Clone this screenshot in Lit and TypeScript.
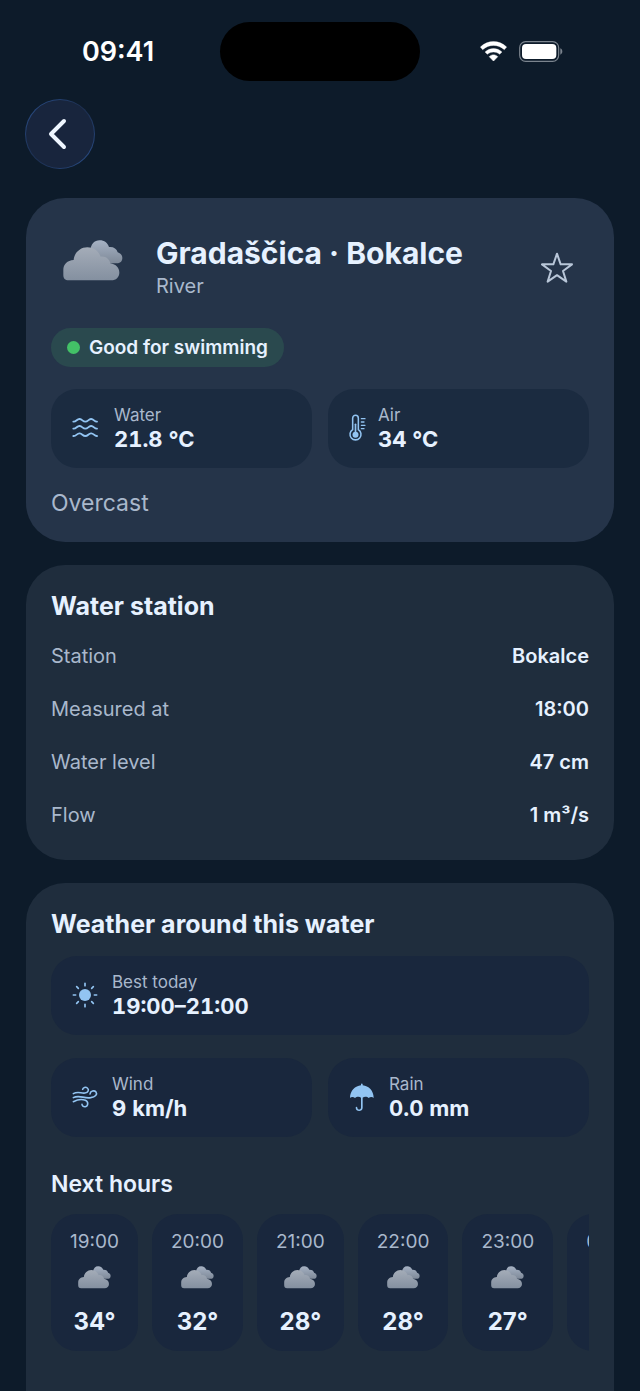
import { LitElement, html, css, svg } from "lit";
import { customElement, property, state } from "lit/decorators.js";

type IconName = "waves" | "thermometer" | "sun" | "wind" | "umbrella";

// Glyph art is drawn on a grid of three units per pixel.
const ICONS: Record<IconName, { w: number; h: number; body: unknown }> = {
  waves: {
    w: 31,
    h: 24,
    body: svg`<g fill="none" stroke="currentColor" stroke-width="5.6" stroke-linecap="round" stroke-linejoin="round">
      <path d="M7 17C16 18 18 8 26 9C34 10 35 17 43 17C51 17 52 10 60 9C68 8 70 18 78 17"/>
      <path d="M7 38C16 39 18 29 26 30C34 31 35 38 43 38C51 38 52 31 60 30C68 29 70 39 78 38"/>
      <path d="M7 60C16 61 18 51 26 52C34 53 35 60 43 60C51 60 52 53 60 52C68 51 70 61 78 60"/>
    </g>`,
  },
  thermometer: {
    w: 18,
    h: 28,
    body: svg`<g fill="none" stroke="currentColor" stroke-width="4.6" stroke-linecap="round">
      <path d="M14 47V13C14 1 31 1 31 13V47A16.500 16.500 0 1 1 14 47Z" stroke-linejoin="round"/>
      <path d="M22.500 31V58" stroke-width="5"/>
      <path d="M40 14H51M40 24H48M40 34H51M40 44H48" stroke-width="3.800"/>
    </g><circle cx="22.500" cy="62" r="9" fill="currentColor"/>`,
  },
  sun: {
    w: 29,
    h: 28,
    body: svg`<circle cx="42" cy="42" r="18" fill="currentColor"/>
      <g stroke="currentColor" stroke-width="5" stroke-linecap="round">
      <path d="M42 7V14M42 70V77M7 42H14M70 42H77M17 17L22 22M62 62L67 67M17 67L22 62M62 22L67 17"/></g>`,
  },
  wind: {
    w: 29,
    h: 24,
    body: svg`<g fill="none" stroke="currentColor" stroke-width="4.800" stroke-linecap="round">
      <path d="M7 26C21 18 31 26 42 24C52 23 55 14 49 9C44 5 36 7 35 13"/>
      <path d="M7 38C25 28 39 42 59 38C73 36 80 28 75 21C70 15 58 17 57 27"/>
      <path d="M7 50C19 44 33 42 43 46C53 50 52 63 43 65C37 66 33 62 33 58"/>
    </g>`,
  },
  umbrella: {
    w: 29,
    h: 30,
    body: svg`<path d="M6 48C6 26 22 12 39 10V7C39 4 44 4 44 7V10C62 12 77 26 77 48C74 44 66 44 62 48C58 44 49 43 44 47V77C44 90 23 90 23 77C23 73 28 73 28 77C28 84 39 84 39 77V47C35 43 25 44 21 48C17 44 9 44 6 48Z" fill="currentColor"/>`,
  },
};

@customElement("cloud-art")
class CloudArt extends LitElement {
  static styles = css`
    :host { display: block; }
    svg { display: block; width: 100%; height: auto; }
  `;
  render() {
    return html`<svg viewBox="0 0 180 123" aria-hidden="true">
      <defs>
        <linearGradient id="back" x1="0" y1="0" x2="0" y2="1">
          <stop offset="0" stop-color="#a6b2c4" />
          <stop offset="1" stop-color="#7e8998" />
        </linearGradient>
        <linearGradient id="front" x1="0" y1="0" x2="0" y2="1">
          <stop offset="0" stop-color="#a4acb8" />
          <stop offset="1" stop-color="#8490a0" />
        </linearGradient>
      </defs>
      <path
        fill="url(#back)"
        d="M82 34C83 12 94 1 110 1C124 1 134 9 138 21C152 20 161 26 164 37C173 40 178 46 178 54C178 64 171 70 161 70H120Z"
      />
      <path
        fill="url(#front)"
        d="M17 121C6 121 1 115 1 105V90C1 73 13 61 32 60C34 38 52 22 73 22C92 22 106 33 113 50C128 48 139 57 142 70C159 73 169 83 169 98C169 111 159 121 145 121Z"
      />
    </svg>`;
  }
}

@customElement("metric-tile")
class MetricTile extends LitElement {
  @property() icon: IconName = "sun";
  @property() label = "";
  @property() value = "";
  static styles = css`
    :host {
      display: flex;
      align-items: center;
      gap: 12px;
      height: 79px;
      padding: 0 20px 2px;
      box-sizing: border-box;
      border-radius: 26px;
      background: var(--tile);
    }
    svg { flex: none; color: #92c4f2; }
    .label { font-size: 17px; line-height: 22px; color: var(--muted); }
    .value { font-size: 22px; line-height: 26px; font-weight: 700; font-variant-numeric: tabular-nums; color: var(--text); }
  `;
  render() {
    const i = ICONS[this.icon];
    return html`<svg width=${i.w} height=${i.h} viewBox="0 0 ${i.w * 3} ${i.h * 3}" aria-hidden="true">${i.body}</svg>
      <div>
        <div class="label">${this.label}</div>
        <div class="value">${this.value}</div>
      </div>`;
  }
}

@customElement("app-root")
class AppRoot extends LitElement {
  @state() favourite = false;

  private station = [
    ["Station", "Bokalce"],
    ["Measured at", "18:00"],
    ["Water level", "47 cm"],
    ["Flow", "1 m³/s"],
  ];
  private hours = [
    ["19:00", "34°"],
    ["20:00", "32°"],
    ["21:00", "28°"],
    ["22:00", "28°"],
    ["23:00", "27°"],
    ["00:00", "26°"],
  ];

  static styles = css`
    :host {
      --text: #e6f1ff;
      --muted: #a9b8cc;
      display: flex;
      flex-direction: column;
      height: 100vh;
      overflow: hidden;
      background: #0d1b2a;
      color: var(--text);
      font-family: Inter, "Noto Sans", sans-serif;
    }
    h1, h2, h3, p, dl, dd { margin: 0; }
    button { border: 0; padding: 0; background: none; color: inherit; cursor: pointer; }
    .status {
      flex: none;
      display: grid;
      grid-template-columns: 1fr 200px 1fr;
      align-items: center;
      padding: 22px 16px 18px;
      color: #fff;
    }
    .clock { justify-self: center; font-size: 27px; line-height: 32px; font-weight: 600; }
    .island { height: 59px; border-radius: 30px; background: #000; }
    .signals { justify-self: center; display: flex; align-items: center; gap: 12px; padding-right: 2px; }
    .nav { flex: none; padding: 0 25px 29px; }
    .back {
      display: grid;
      place-items: center;
      width: 70px;
      height: 70px;
      border-radius: 50%;
      border: 1px solid transparent;
      background:
        linear-gradient(#18253d, #18253d) padding-box,
        linear-gradient(135deg, #2c5290, #1d3154 45%, #1d3154 55%, #2c5290) border-box;
      box-sizing: border-box;
    }
    main {
      flex: 1;
      min-height: 0;
      overflow-y: auto;
      scrollbar-width: none;
      display: flex;
      flex-direction: column;
      gap: 23px;
      padding: 0 26px;
    }
    .card {
      flex: none;
      padding: 26px 25px;
      box-sizing: border-box;
      border-radius: 39px;
      background: #1f2d3d;
    }
    .summary { --tile: #1b2b40; background: #253449; padding-bottom: 23px; }
    .weather { --tile: #19273d; padding-bottom: 120px; }
    .head { display: flex; align-items: center; height: 88px; }
    .head cloud-art { width: 60px; margin: 0 33px 15px 12px; }
    .names { flex: 1; }
    h1 { font-size: 30px; line-height: 36px; font-weight: 700; }
    .kind { font-size: 20px; line-height: 30px; color: var(--muted); }
    .star { display: grid; place-items: center; width: 64px; height: 64px; color: #b8c6d8; }
    .pill {
      display: inline-flex;
      align-items: center;
      gap: 9px;
      height: 39px;
      margin: 16px 0 22px;
      padding: 0 16px;
      border-radius: 20px;
      background: #2a494e;
      font-size: 19px;
      font-weight: 600;
    }
    .dot { width: 13px; height: 13px; border-radius: 50%; background: #43c167; }
    .pair { display: grid; grid-template-columns: 1fr 1fr; gap: 16px; }
    .sky { margin-top: 19px; font-size: 23px; line-height: 32px; color: var(--muted); }
    h2 { font-size: 25px; line-height: 30px; font-weight: 700; }
    dl { display: flex; flex-direction: column; gap: 25px; padding: 21px 0 5px; }
    .row { display: flex; justify-content: space-between; font-size: 20px; line-height: 28px; }
    dt { color: var(--muted); }
    dd { font-weight: 600; }
    .best { margin: 17px 0 23px; }
    h3 { margin: 32px 0 15px; font-size: 23px; line-height: 30px; font-weight: 600; }
    .hours { display: flex; gap: 14px; overflow-x: auto; scrollbar-width: none; }
    .hour {
      flex: none;
      display: flex;
      flex-direction: column;
      align-items: center;
      padding: 14px 19px;
      border-radius: 26px;
      background: var(--tile);
    }
    .time { font-size: 19px; line-height: 28px; color: var(--muted); }
    .hour cloud-art { width: 33px; margin: 10px 0 18px; }
    .temp { font-size: 24px; line-height: 30px; font-weight: 700; }
  `;

  render() {
    return html`
      <div class="status">
        <span class="clock">09:41</span>
        <span class="island"></span>
        <span class="signals">
          <svg width="27" height="21" viewBox="0 0 81 63" fill="#fff" aria-hidden="true">
            <path d="M1 18C24 -4 57 -4 80 18L73 26C54 9 27 9 8 26Z" stroke="#fff" stroke-width="1" stroke-linejoin="round" />
            <path d="M15 33C30 19 51 19 66 33L59 40C48 31 33 31 22 40Z" stroke="#fff" stroke-width="1" stroke-linejoin="round" />
            <path d="M28 47C36 40 45 40 53 47L40.500 60Z" stroke="#fff" stroke-width="2" stroke-linejoin="round" />
          </svg>
          <svg width="44" height="21" viewBox="0 0 132 63" aria-hidden="true">
            <rect x="2" y="2" width="117" height="59" rx="18" fill="none" stroke="#7b848e" stroke-width="3.500" />
            <rect x="9" y="9" width="103" height="45" rx="12" fill="#fff" />
            <path d="M124 22C132 25 132 38 124 41Z" fill="#7b848e" />
          </svg>
        </span>
      </div>
      <nav class="nav">
        <button class="back" aria-label="Back">
          <svg width="24" height="36" viewBox="0 0 24 36" fill="none" stroke="#eef6ff" stroke-width="4" stroke-linecap="round" stroke-linejoin="round" aria-hidden="true">
            <path d="M16 5L3 18L16 31" />
          </svg>
        </button>
      </nav>
      <main>
        <section class="card summary">
          <div class="head">
            <cloud-art></cloud-art>
            <div class="names">
              <h1>Gradaščica · Bokalce</h1>
              <p class="kind">River</p>
            </div>
            <button class="star" aria-label="Favourite" aria-pressed=${this.favourite} @click=${() => (this.favourite = !this.favourite)}>
              <svg width="34" height="32" viewBox="0 0 102 96" fill=${this.favourite ? "currentColor" : "none"} stroke="currentColor" stroke-width="6" stroke-linejoin="round" aria-hidden="true">
                <path d="M51 5L62 37H96L69 57L79 89L51 69.500L23 89L33 57L6 37H40Z" />
              </svg>
            </button>
          </div>
          <div class="pill"><span class="dot"></span>Good for swimming</div>
          <div class="pair">
            <metric-tile icon="waves" label="Water" value="21.8 °C"></metric-tile>
            <metric-tile icon="thermometer" label="Air" value="34 °C"></metric-tile>
          </div>
          <p class="sky">Overcast</p>
        </section>
        <section class="card">
          <h2>Water station</h2>
          <dl>
            ${this.station.map(([k, v]) => html`<div class="row"><dt>${k}</dt><dd>${v}</dd></div>`)}
          </dl>
        </section>
        <section class="card weather">
          <h2>Weather around this water</h2>
          <metric-tile class="best" icon="sun" label="Best today" value="19:00–21:00"></metric-tile>
          <div class="pair">
            <metric-tile icon="wind" label="Wind" value="9 km/h"></metric-tile>
            <metric-tile icon="umbrella" label="Rain" value="0.0 mm"></metric-tile>
          </div>
          <h3>Next hours</h3>
          <div class="hours">
            ${this.hours.map(
              ([t, d]) => html`<div class="hour"><span class="time">${t}</span><cloud-art></cloud-art><span class="temp">${d}</span></div>`
            )}
          </div>
        </section>
      </main>
    `;
  }
}
